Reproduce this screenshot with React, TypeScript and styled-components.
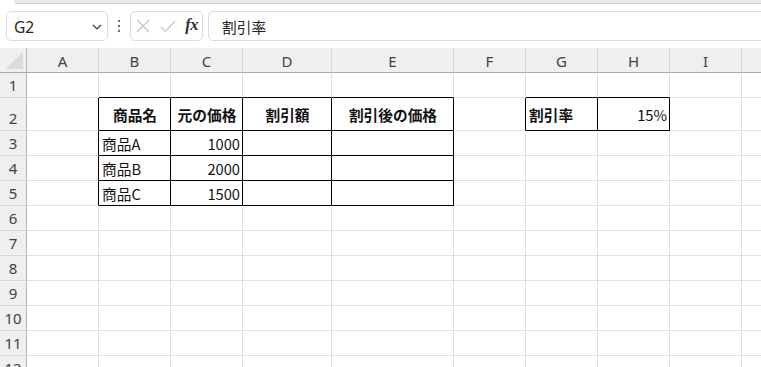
import React from 'react'
import styled, { createGlobalStyle } from 'styled-components'

const GlobalStyle = createGlobalStyle`
  html, body {
    margin: 0;
    padding: 0;
    background: #ffffff;
  }
  body {
    font-family: 'Noto Sans', 'Noto Sans CJK JP', sans-serif;
  }
`

const Page = styled.div`
  width: 761px;
  height: 367px;
  overflow: hidden;
  background: #ffffff;
`

const RibbonEdge = styled.div`
  height: 3px;
  margin-left: 14px;
  background: #e9e9e9;
  border-bottom: 1px solid #d2d2d2;
  border-bottom-left-radius: 8px;
`

const FormulaBar = styled.div`
  display: flex;
  align-items: center;
  height: 30px;
  margin-top: 7px;
  padding-left: 6px;
`

const NameBox = styled.div`
  box-sizing: border-box;
  flex-shrink: 0;
  width: 102px;
  height: 30px;
  border: 1px solid #dcdcdc;
  border-radius: 5px;
  display: flex;
  align-items: center;
  justify-content: space-between;
  padding: 1px 5px 0 7px;
  font-size: 15.5px;
  color: #262626;
`

const MoreDots = styled.div`
  flex-shrink: 0;
  width: 22px;
  display: flex;
  flex-direction: column;
  align-items: center;
  gap: 2.5px;

  span {
    width: 2.5px;
    height: 2.5px;
    border-radius: 50%;
    background: #3a3a3a;
  }
`

const EditBox = styled.div`
  box-sizing: border-box;
  flex-shrink: 0;
  width: 73px;
  height: 30px;
  border: 1px solid #dcdcdc;
  border-radius: 5px;
  display: flex;
  align-items: center;
  justify-content: space-between;
  padding: 0 4px 0 5px;
`

const Fx = styled.span`
  font-family: 'Liberation Serif', 'DejaVu Serif', serif;
  font-style: italic;
  font-weight: bold;
  font-size: 16.5px;
  color: #303030;
  letter-spacing: -0.5px;
  padding-bottom: 2px;
`

const FormulaInput = styled.div`
  box-sizing: border-box;
  flex: 1;
  height: 30px;
  margin-left: 5px;
  margin-right: -12px;
  border: 1px solid #dcdcdc;
  border-radius: 5px;
  display: flex;
  align-items: center;
  padding-left: 13px;
  font-family: 'Noto Sans CJK JP', sans-serif;
  font-size: 14.7px;
  color: #222222;
`

const Sheet = styled.div`
  margin-top: 7px;
  display: grid;
  grid-template-columns: 27px 72px 72px 72px 89px 122px 72px 72px 72px 72px 72px;
  grid-template-rows: 25px 25px 33px repeat(10, 25px);
`

const Corner = styled.div`
  box-sizing: border-box;
  position: relative;
  background: #efefef;
  border-right: 1px solid #b6b6b6;
  border-bottom: 1px solid #a9a9a9;

  svg {
    position: absolute;
    left: 6px;
    top: 4px;
  }
`

const ColHead = styled.div`
  box-sizing: border-box;
  background: #efefef;
  border-right: 1px solid #d6d6d6;
  border-bottom: 1px solid #a9a9a9;
  display: flex;
  align-items: center;
  justify-content: center;
  font-size: 15px;
  color: #424242;
  padding-top: 1px;
`

const RowHead = styled.div`
  box-sizing: border-box;
  background: #efefef;
  border-right: 1px solid #b6b6b6;
  border-bottom: 1px solid #d9d9d9;
  display: flex;
  align-items: flex-end;
  justify-content: center;
  font-size: 15px;
  line-height: 20px;
  padding-bottom: 2px;
  color: #424242;
`

const Cell = styled.div<{
  $align: 'left' | 'center' | 'right'
  $bold: boolean
  $rb: boolean
  $bb: boolean
}>`
  box-sizing: border-box;
  display: flex;
  align-items: center;
  justify-content: ${(p) =>
    p.$align === 'center' ? 'center' : p.$align === 'right' ? 'flex-end' : 'flex-start'};
  padding: 1px 2px 0 3px;
  border-right: 1px solid ${(p) => (p.$rb ? '#000000' : '#e1e1e1')};
  border-bottom: 1px solid ${(p) => (p.$bb ? '#000000' : '#e1e1e1')};
  font-family: 'Noto Sans CJK JP', sans-serif;
  font-size: 14.7px;
  font-weight: ${(p) => (p.$bold ? 700 : 400)};
  color: #111111;
  white-space: nowrap;
  overflow: hidden;
`

const columns = ['A', 'B', 'C', 'D', 'E', 'F', 'G', 'H', 'I', '']
const rowCount = 12

type CellData = { text: string; bold?: boolean; align?: 'left' | 'center' | 'right' }

const cells: Record<string, CellData> = {
  B2: { text: '商品名', bold: true, align: 'center' },
  C2: { text: '元の価格', bold: true, align: 'center' },
  D2: { text: '割引額', bold: true, align: 'center' },
  E2: { text: '割引後の価格', bold: true, align: 'center' },
  G2: { text: '割引率', bold: true },
  H2: { text: '15%', align: 'right' },
  B3: { text: '商品A' },
  C3: { text: '1000', align: 'right' },
  B4: { text: '商品B' },
  C4: { text: '2000', align: 'right' },
  B5: { text: '商品C' },
  C5: { text: '1500', align: 'right' },
}

// bordered ranges: [firstCol, lastCol, firstRow, lastRow]
const boxes = [
  [1, 4, 2, 5],
  [6, 7, 2, 2],
]

const boxed = (c: number, r: number) =>
  boxes.some(([c1, c2, r1, r2]) => c >= c1 && c <= c2 && r >= r1 && r <= r2)

const App = () => {
  return (
    <Page>
      <GlobalStyle />
      <RibbonEdge />
      <FormulaBar>
        <NameBox>
          <span>G2</span>
          <svg width="10" height="6" viewBox="0 0 10 6">
            <path d="M1 1 L5 5 L9 1" fill="none" stroke="#3a3a3a" strokeWidth="1.2" />
          </svg>
        </NameBox>
        <MoreDots>
          <span />
          <span />
          <span />
        </MoreDots>
        <EditBox>
          <svg width="14" height="14" viewBox="0 0 14 14">
            <path d="M1 1 L13 13 M13 1 L1 13" stroke="#c4c4c4" strokeWidth="1.2" />
          </svg>
          <svg width="16" height="13" viewBox="0 0 16 13">
            <path d="M1 7 L5.5 11.5 L15 1" fill="none" stroke="#c4c4c4" strokeWidth="1.2" />
          </svg>
          <Fx>fx</Fx>
        </EditBox>
        <FormulaInput>割引率</FormulaInput>
      </FormulaBar>
      <Sheet>
        <Corner>
          <svg width="18" height="18" viewBox="0 0 18 18">
            <path d="M17 0 L17 17 L0 17 Z" fill="#dadada" />
          </svg>
        </Corner>
        {columns.map((col, i) => (
          <ColHead key={`h${i}`}>{col}</ColHead>
        ))}
        {Array.from({ length: rowCount }, (_, ri) => {
          const r = ri + 1
          return (
            <React.Fragment key={r}>
              <RowHead>{r}</RowHead>
              {columns.map((col, ci) => {
                const data = col ? cells[`${col}${r}`] : undefined
                return (
                  <Cell
                    key={`${ci}-${r}`}
                    $align={data?.align ?? 'left'}
                    $bold={!!data?.bold}
                    $rb={boxed(ci, r) || boxed(ci + 1, r)}
                    $bb={boxed(ci, r) || boxed(ci, r + 1)}
                  >
                    {data?.text}
                  </Cell>
                )
              })}
            </React.Fragment>
          )
        })}
      </Sheet>
    </Page>
  )
}

export default App
